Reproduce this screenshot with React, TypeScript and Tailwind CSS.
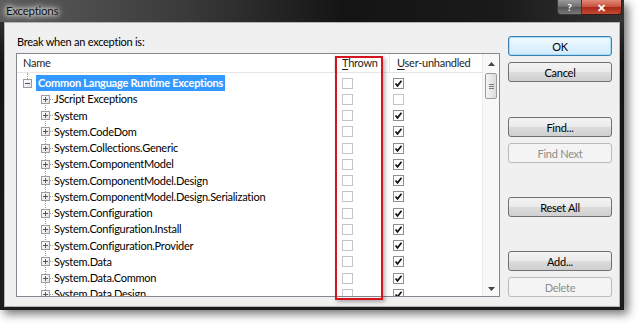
import React from "react";

const FONT = { fontFamily: 'Lato, "Noto Sans", sans-serif' };

type Row = { name: string; thrown: boolean; user: boolean };

const children: Row[] = [
  { name: "JScript Exceptions", thrown: false, user: false },
  { name: "System", thrown: false, user: true },
  { name: "System.CodeDom", thrown: false, user: true },
  { name: "System.Collections.Generic", thrown: false, user: true },
  { name: "System.ComponentModel", thrown: false, user: true },
  { name: "System.ComponentModel.Design", thrown: false, user: true },
  { name: "System.ComponentModel.Design.Serialization", thrown: false, user: true },
  { name: "System.Configuration", thrown: false, user: true },
  { name: "System.Configuration.Install", thrown: false, user: true },
  { name: "System.Configuration.Provider", thrown: false, user: true },
  { name: "System.Data", thrown: false, user: true },
  { name: "System.Data.Common", thrown: false, user: true },
  { name: "System.Data.Design", thrown: false, user: true },
];

function Check({ on }: { on: boolean }) {
  return (
    <div
      className={`w-[11px] h-[11px] border bg-white flex items-center justify-center ${
        on ? "border-[#8f8f8f]" : "border-[#c4c4c4]"
      }`}
    >
      {on && (
        <svg width="9" height="9" viewBox="0 0 9 9">
          <path d="M1.5 4.5 L3.5 6.8 L7.5 1.8" fill="none" stroke="#111" strokeWidth="1.7" />
        </svg>
      )}
    </div>
  );
}

function Expander({ minus }: { minus?: boolean }) {
  return (
    <div className="w-[9px] h-[9px] border border-[#9c9c9c] bg-gradient-to-br from-white to-[#e2e2e2] relative shrink-0">
      <div className="absolute left-[1px] right-[1px] top-[3px] h-[1px] bg-[#4a5a6a]" />
      {!minus && <div className="absolute top-[1px] bottom-[1px] left-[3px] w-[1px] bg-[#4a5a6a]" />}
    </div>
  );
}

function Btn({
  label,
  kind = "normal",
  className = "",
}: {
  label: string;
  kind?: "normal" | "default" | "disabled";
  className?: string;
}) {
  const base = "h-[20px] w-[104px] rounded-[3px] border flex items-center justify-center leading-none";
  const style =
    kind === "default"
      ? "border-[#3c7fb1] bg-gradient-to-b from-[#f2fafe] to-[#cfeafb] text-black shadow-[inset_0_0_0_1px_#a5dcf9]"
      : kind === "disabled"
      ? "border-[#b8bcbf] bg-[#f4f4f4] text-[#8d8d8d]"
      : "border-[#707070] bg-[linear-gradient(to_bottom,#f3f3f3_0%,#ebebeb_49%,#dddddd_50%,#cfcfcf_100%)] text-black";
  return <div className={`${base} ${style} ${className}`}>{label}</div>;
}

export default function App() {
  return (
    <div className="w-[640px] h-[325px] bg-white relative overflow-hidden text-[11px] tracking-[-0.25px]" style={FONT}>
      <div className="w-[624px] h-[310px] flex flex-col bg-[linear-gradient(to_bottom,#3a3a3a,#141414_20%,#1c1c1c)] shadow-[4px_4px_9px_rgba(0,0,0,0.55)]">
        {/* title bar */}
        <div className="h-[22px] flex items-start justify-between bg-[linear-gradient(to_right,#5c5c5c_0%,#3a3a3a_30%,#141414_55%,#1a1a1a_80%,#333_100%)]">
          <div className="pl-[6px] pt-[3px] text-[11.5px] leading-[15px] text-[#111] [text-shadow:0_0_6px_#fff,0_0_4px_#fff,0_0_10px_#ddd]">
            Exceptions
          </div>
          <div className="flex mr-[2px]">
            <div className="w-[25px] h-[15px] rounded-bl-[4px] border border-t-0 border-[#3a3a3a] bg-[linear-gradient(to_bottom,#9a9a9a,#6e6e6e_50%,#555_51%,#777)] flex items-center justify-center text-[10px] font-bold text-white leading-none">
              ?
            </div>
            <div className="w-[40px] h-[15px] rounded-br-[4px] border border-t-0 border-l-0 border-[#3a1a1a] bg-[linear-gradient(to_bottom,#e08a7a,#c7503c_50%,#a8281a_51%,#c44a30)] flex items-center justify-center text-[11px] font-bold text-white leading-none">
              ✕
            </div>
          </div>
        </div>
        {/* client */}
        <div className="mx-[4px] mb-[3px] flex-1 bg-[#f0f0f0] shadow-[inset_0_0_0_1px_#b4b4b4] flex">
          <div className="pl-[12px] pt-[12px] flex flex-col">
            <div className="pl-[1px] leading-[16px] text-black">Break when an exception is:</div>
            <div className="mt-[3px] h-[244px] w-[484px] border border-[#828790] bg-white flex text-black overflow-hidden">
              <div className="w-[465px] flex flex-col">
                <div className="h-[19px] shrink-0 flex border-b border-[#e5e5e5] text-[#1e1e1e] leading-[18px]">
                  <div className="w-[318px] pl-[6px] border-r border-[#ececec]">Name</div>
                  <div className="w-[55px] pl-[7px] border-r border-[#ececec]">
                    <span className="underline underline-offset-2">T</span>hrown
                  </div>
                  <div className="flex-1 pl-[7px]">
                    <span className="underline underline-offset-2">U</span>ser-unhandled
                  </div>
                </div>
                <div className="relative pt-[2px] flex-1 overflow-hidden">
                  <div className="absolute left-[10px] top-0 h-[6px] border-l border-dotted border-[#a0a0a0]" />
                  <div className="absolute left-[28px] top-[22px] bottom-0 border-l border-dotted border-[#a0a0a0]" />
                  {/* root row */}
                  <div className="h-[16.25px] flex items-center">
                    <div className="w-[318px] flex items-center pl-[6px]">
                      <Expander minus />
                      <div className="ml-[4px] px-[2px] h-[16px] bg-[#3399ff] text-white font-bold leading-[16px]">
                        Common Language Runtime Exceptions
                      </div>
                    </div>
                    <div className="w-[55px] pl-[7px]">
                      <Check on={false} />
                    </div>
                    <div className="pl-[3px]">
                      <Check on={true} />
                    </div>
                  </div>
                  {children.map((r) => (
                    <div key={r.name} className="h-[16.25px] flex items-center">
                      <div className="w-[318px] flex items-center pl-[24px] relative">
                        <Expander />
                        <div className="w-[3px] border-t border-dotted border-[#a0a0a0]" />
                        <div className="ml-[1px] leading-[16px] whitespace-nowrap">{r.name}</div>
                      </div>
                      <div className="w-[55px] pl-[7px]">
                        <Check on={r.thrown} />
                      </div>
                      <div className="pl-[3px]">
                        <Check on={r.user} />
                      </div>
                    </div>
                  ))}
                </div>
              </div>
              {/* scrollbar */}
              <div className="w-[17px] bg-[#f8f8f8] border-l border-[#ececec] flex flex-col items-center">
                <div className="h-[19px] flex items-center justify-center">
                  <svg width="7" height="4" viewBox="0 0 7 4">
                    <path d="M0 4 L3.5 0 L7 4 Z" fill="#444" />
                  </svg>
                </div>
                <div className="w-[12px] h-[26px] rounded-[2px] border border-[#9b9b9b] bg-gradient-to-r from-[#f4f4f4] to-[#dcdcdc] flex flex-col items-center justify-center gap-[1px]">
                  <div className="w-[5px] h-[1px] bg-[#7a7a7a]" />
                  <div className="w-[5px] h-[1px] bg-[#7a7a7a]" />
                  <div className="w-[5px] h-[1px] bg-[#7a7a7a]" />
                </div>
                <div className="flex-1" />
                <div className="h-[14px] flex items-center justify-center">
                  <svg width="7" height="4" viewBox="0 0 7 4">
                    <path d="M0 0 L3.5 4 L7 0 Z" fill="#444" />
                  </svg>
                </div>
              </div>
            </div>
          </div>
          {/* buttons */}
          <div className="ml-[8px] flex flex-col">
            <Btn label="OK" kind="default" className="mt-[14px]" />
            <Btn label="Cancel" className="mt-[6px]" />
            <Btn label="Find..." className="mt-[35px]" />
            <Btn label="Find Next" kind="disabled" className="mt-[6px]" />
            <Btn label="Reset All" className="mt-[34px]" />
            <Btn label="Add..." className="mt-[34px]" />
            <Btn label="Delete" kind="disabled" className="mt-[6px]" />
          </div>
        </div>
      </div>
      {/* red annotation */}
      <div className="absolute left-[335px] top-[56px] w-[48px] h-[244px] border-2 border-[#d4151d] shadow-[2px_2px_4px_rgba(0,0,0,0.3)]" />
    </div>
  );
}
